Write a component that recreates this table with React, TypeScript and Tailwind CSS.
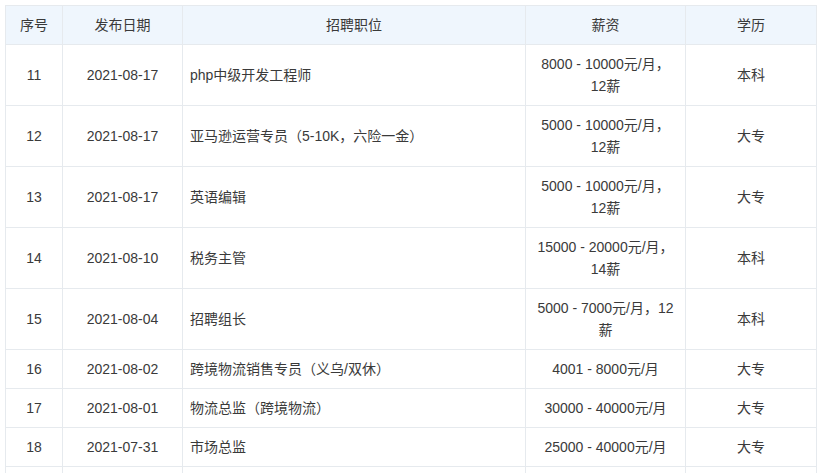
const rows: { no: number; date: string; title: string; salary: string[]; edu: string }[] = [
  { no: 11, date: "2021-08-17", title: "php中级开发工程师", salary: ["8000 - 10000元/月，", "12薪"], edu: "本科" },
  { no: 12, date: "2021-08-17", title: "亚马逊运营专员（5-10K，六险一金）", salary: ["5000 - 10000元/月，", "12薪"], edu: "大专" },
  { no: 13, date: "2021-08-17", title: "英语编辑", salary: ["5000 - 10000元/月，", "12薪"], edu: "大专" },
  { no: 14, date: "2021-08-10", title: "税务主管", salary: ["15000 - 20000元/月，", "14薪"], edu: "本科" },
  { no: 15, date: "2021-08-04", title: "招聘组长", salary: ["5000 - 7000元/月，12", "薪"], edu: "本科" },
  { no: 16, date: "2021-08-02", title: "跨境物流销售专员（义乌/双休）", salary: ["4001 - 8000元/月"], edu: "大专" },
  { no: 17, date: "2021-08-01", title: "物流总监（跨境物流）", salary: ["30000 - 40000元/月"], edu: "大专" },
  { no: 18, date: "2021-07-31", title: "市场总监", salary: ["25000 - 40000元/月"], edu: "大专" },
];

const cell = "border border-[#e6eaee] px-2 py-2 text-center";

export default function App() {
  return (
    <div
      className="h-[473px] overflow-hidden bg-white pl-[5px] pt-[5px] pr-[4px] text-[14px] leading-[22px] text-[#3a3a3a]"
      style={{ fontFamily: '"Liberation Sans", "Noto Sans CJK SC", sans-serif' }}
    >
      <table className="w-[811px] table-fixed border-collapse">
        <colgroup>
          <col className="w-[57px]" />
          <col className="w-[120px]" />
          <col className="w-[343px]" />
          <col className="w-[160px]" />
          <col className="w-[131px]" />
        </colgroup>
        <thead>
          <tr className="bg-[#eff6fd]">
            <th className="h-[39px] border border-[#e6eaee] px-2 text-center font-normal">序号</th>
            <th className="border border-[#e6eaee] px-2 text-center font-normal">发布日期</th>
            <th className="border border-[#e6eaee] px-2 text-center font-normal">招聘职位</th>
            <th className="border border-[#e6eaee] px-2 text-center font-normal">薪资</th>
            <th className="border border-[#e6eaee] px-2 text-center font-normal">学历</th>
          </tr>
        </thead>
        <tbody>
          {rows.map((r) => (
            <tr key={r.no}>
              <td className={cell}>{r.no}</td>
              <td className={cell}>{r.date}</td>
              <td className="border border-[#e6eaee] py-2 pl-[7px] pr-2 text-left">{r.title}</td>
              <td className={cell}>
                {r.salary.map((s) => (
                  <div key={s}>{s}</div>
                ))}
              </td>
              <td className={cell}>{r.edu}</td>
            </tr>
          ))}
          {/* next row, only its top edge is in view */}
          <tr>
            <td className="h-[39px] border border-[#e6eaee]" />
            <td className="border border-[#e6eaee]" />
            <td className="border border-[#e6eaee]" />
            <td className="border border-[#e6eaee]" />
            <td className="border border-[#e6eaee]" />
          </tr>
        </tbody>
      </table>
    </div>
  );
}
